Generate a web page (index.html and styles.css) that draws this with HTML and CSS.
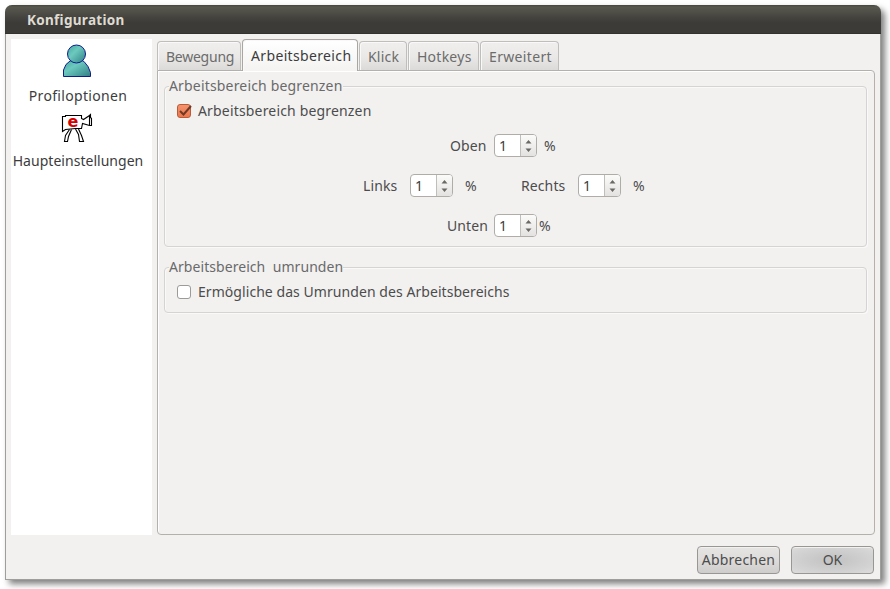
FILE: index.html
```html
<!DOCTYPE html>
<html lang="de">
<head>
<meta charset="utf-8">
<title>Konfiguration</title>
<link rel="stylesheet" href="styles.css">
</head>
<body>
<svg class="defs" width="0" height="0" aria-hidden="true">
  <symbol id="arrows" viewBox="0 0 7 12"><path d="M.5 3.500 3.500 0 6.500 3.500ZM.5 8.500h6L3.500 12Z" fill="#6b6965"/></symbol>
</svg>
<main class="window">
  <header class="titlebar">Konfiguration</header>
  <div class="content">
    <nav class="sidebar">
      <a class="nav-item">
        <svg class="icon" width="32" height="34" viewBox="0 0 32 34">
          <defs><linearGradient id="teal" x1="0" x2="1" y1="0" y2="1"><stop offset="0" stop-color="#45a89e"/><stop offset=".4" stop-color="#6cc9bf"/><stop offset="1" stop-color="#2f7f83"/></linearGradient></defs>
          <path d="M2.500 32.500V26L5 20.500 9 17 12 15.500H19L23 17.500 27 22.500 29.500 28.500V32.500Z" fill="url(#teal)" stroke="#101b8c"/>
          <circle cx="15.500" cy="10" r="9" fill="url(#teal)" stroke="#101b8c"/>
        </svg>
        <span class="label w-profile">Profiloptionen</span>
      </a>
      <a class="nav-item second">
        <svg class="icon" width="32" height="30" viewBox="0 0 32 30">
          <path d="M1.500 3.500H4.500V2.500H20.500V5.500L22.500 6.500 28.500 2.500 29.500 1.500V4.500L30.500 5.500V12.500H28.500L21.500 10.500 20.500 15.500H14.500L4.500 16.500 1.500 18.500Z" fill="#fff" stroke="#000" stroke-width="1.100"/>
          <path d="M8.500 16.500 4.500 22.500 3.500 28.500H6.500L7.500 23.500 10.500 16.500M14.500 16 17.500 21.500 18.500 28.500H22.500L20.500 22.500 17.500 16M28.500 2.500V12" fill="none" stroke="#000" stroke-width="1.100"/>
          <text x="12" y="13.500" text-anchor="middle" class="e">e</text>
        </svg>
        <span class="label w-main">Haupteinstellungen</span>
      </a>
    </nav>
    <section class="tabs">
      <div class="tablist">
        <div class="tab t1"><span class="w-t1">Bewegung</span></div>
        <div class="tab t2 active"><span class="w-t2">Arbeitsbereich</span></div>
        <div class="tab t3"><span class="w-t3">Klick</span></div>
        <div class="tab t4"><span class="w-t4">Hotkeys</span></div>
        <div class="tab t5"><span class="w-t5">Erweitert</span></div>
      </div>
      <div class="panel">
        <section class="group limit">
          <h2 class="w-g1">Arbeitsbereich begrenzen</h2>
          <label class="check"><span class="box on"><svg width="18" height="16" viewBox="0 0 18 16"><path d="M4 8 7.500 11.500 15 3" fill="none" stroke="#6e3a26" stroke-width="2"/></svg></span><span class="w-c1">Arbeitsbereich begrenzen</span></label>
          <div class="row top"><span class="name w-oben">Oben</span><span class="spin"><b>1</b><i><svg width="7" height="12"><use href="#arrows"/></svg></i></span><span class="pct">%</span></div>
          <div class="row middle"><span class="name w-links">Links</span><span class="spin"><b>1</b><i><svg width="7" height="12"><use href="#arrows"/></svg></i></span><span class="pct far">%</span><span class="name w-rechts">Rechts</span><span class="spin"><b>1</b><i><svg width="7" height="12"><use href="#arrows"/></svg></i></span><span class="pct far">%</span></div>
          <div class="row bottom"><span class="name w-unten">Unten</span><span class="spin"><b>1</b><i><svg width="7" height="12"><use href="#arrows"/></svg></i></span><span class="pct near">%</span></div>
        </section>
        <section class="group wrap">
          <h2 class="w-g2">Arbeitsbereich&nbsp; umrunden</h2>
          <label class="check"><span class="box"></span><span class="w-c2">Ermögliche das Umrunden des Arbeitsbereichs</span></label>
        </section>
      </div>
    </section>
  </div>
  <footer class="actions">
    <button><span class="w-cancel">Abbrechen</span></button>
    <button class="ok">OK</button>
  </footer>
</main>
</body>
</html>
```
FILE: styles.css
```css
* { box-sizing: border-box; }
body { margin: 0; width: 890px; height: 589px; overflow: hidden; background: #fff; padding: 5px; font: 14px/20px "Noto Sans", sans-serif; color: #4c4c4c; }
.defs { display: block; }
.window { width: 876px; height: 575px; background: #f2f1f0; border: 1px solid #a09e9a; border-top: 0; border-radius: 7px 7px 0 0; box-shadow: 4px 4px 6px rgba(0,0,0,.5); }
.titlebar { height: 29px; margin: 0 -1px; padding: 5px 0 0 22px; border-radius: 7px 7px 0 0; background: linear-gradient(#45443e 0, #59584f 2px, #45443f 12px, #3c3b37 18px, #3c3b37 28px, #33322f 28px); color: #dfdbd2; font: bold 13.5px/20px "Noto Sans", sans-serif; letter-spacing: .3px; }
.content { display: flex; height: 501px; padding: 5px 5px 0; gap: 5px; }
.sidebar { width: 141px; height: 496px; background: #fff; color: #3c3c3c; padding-top: 5px; }
.nav-item { display: flex; flex-direction: column; align-items: center; height: 65px; }
.nav-item .icon { flex: none; margin-left: -9px; }
.nav-item .label { margin-top: 8px; margin-left: -7px; white-space: nowrap; }
.nav-item.second .icon { margin-top: 4px; }
.e { font: 900 16px "DejaVu Sans", sans-serif; fill: #d40000; }
.w-profile { letter-spacing: .32px; }
.w-main { letter-spacing: .03px; }
.tabs { width: 718px; height: 496px; }
.tablist { display: flex; height: 31px; align-items: flex-end; }
.tab { height: 29px; border: 1px solid #c0bebb; border-bottom: 0; border-radius: 4px 4px 0 0; background: linear-gradient(#f0efee, #e9e8e6 55%, #dcdad8); box-shadow: inset 1px 1px #faf9f9; color: #6c6c6c; padding: 5px 0 0 8px; white-space: nowrap; margin-right: 1px; }
.t1 { width: 84px; } .t2 { width: 116px; } .t3 { width: 48px; } .t4 { width: 71px; } .t5 { width: 79px; }
.w-t1 { letter-spacing: -.25px; } .w-t2 { letter-spacing: .35px; } .w-t3 { letter-spacing: .2px; } .w-t4 { letter-spacing: .25px; } .w-t5 { letter-spacing: .35px; }
.tab.active { height: 32px; margin-bottom: -1px; z-index: 1; background: linear-gradient(#fff, #f4f3f2); border-color: #aaa7a3; color: #3c3c3c; padding-top: 6px; }
.panel { height: 465px; border: 1px solid #b4b1ad; border-radius: 0 4px 4px 4px; box-shadow: inset 1px 1px #fff; padding: 15px 7px 0 6px; }
.group { border: 1px solid #d6d4d2; border-radius: 4px; box-shadow: inset 1px 1px #faf9f9, 1px 1px #faf9f9; padding-left: 4px; }
.limit { height: 161px; } .wrap { height: 46px; margin-top: 20px; }
h2 { font: inherit; color: #6a6a6a; margin: -11px 0 0; background: #f2f1f0; width: 174px; height: 20px; white-space: nowrap; }
.w-g1, .w-c1 { letter-spacing: .17px; } .w-g2 { letter-spacing: .06px; } .w-c2 { letter-spacing: .06px; }
.check { display: flex; align-items: center; height: 20px; margin: 5px 0 0 8px; white-space: nowrap; gap: 7px; }
.box { width: 14px; height: 14px; border: 1px solid #9d9b98; border-radius: 3px; background: #fff; }
.box.on { background: linear-gradient(#f4936d, #ed764d); border-color: #b85b36; }
.box svg { display: block; margin: -2px 0 0 -2px; overflow: visible; }
.row { display: flex; align-items: center; height: 24px; margin-bottom: 16px; white-space: nowrap; }
.row.top { margin-top: 13px; padding-left: 281px; }
.row.middle { padding-left: 194px; }
.row.bottom { padding-left: 278px; }
.spin { display: flex; width: 43px; height: 23px; margin-bottom: 1px; border: 1px solid #b0ada9; border-radius: 4px; background: #fff; overflow: hidden; }
.spin b { width: 25px; padding: 1px 0 0 4px; font-weight: 400; color: #3c3c3c; }
.spin i { flex: 1; border-left: 1px solid #c0bebb; background: linear-gradient(#fbfbfa, #e3e2e0); display: grid; place-items: center; }
.name { letter-spacing: .1px; }
.row .w-oben { width: 44px; } .row .w-links { width: 47px; } .row .w-rechts { width: 57px; } .row .w-unten { width: 47px; }
.pct { padding-left: 7px; }
.pct.far { padding-left: 12px; width: 68px; }
.pct.near { padding-left: 2px; }
.actions { display: flex; justify-content: flex-end; gap: 11px; padding: 11px 6px 0 0; }
button { width: 83px; height: 28px; border: 1px solid #999794; border-radius: 4px; background: linear-gradient(#e6e5e4, #dddcdb 50%, #cfcdcc); box-shadow: inset 0 1px #f2f1f0; color: #4c4c4c; font: 14px/20px "Noto Sans", sans-serif; padding: 0; white-space: nowrap; }
button.ok { background: radial-gradient(ellipse at center, #c6c6c6 20%, #d5d4d4 75%, #dedddc); }
.w-cancel { letter-spacing: .2px; }
```
